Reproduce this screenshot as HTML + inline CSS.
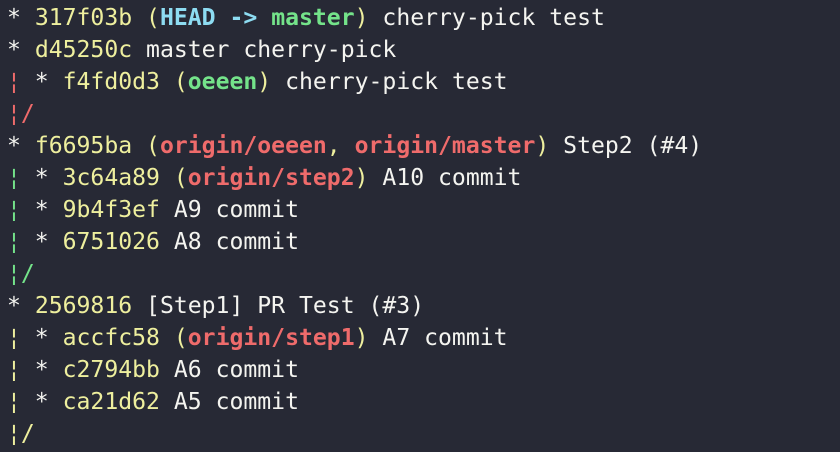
<!DOCTYPE html>
<html><head><meta charset="utf-8"><style>
html,body{margin:0;padding:0;background:#272935;width:840px;height:452px;overflow:hidden}
pre{margin:0;padding:2px 0 0 7px;font-family:"DejaVu Sans Mono","Liberation Mono",monospace;font-size:23.1px;line-height:32px;color:#f4f4f0;letter-spacing:0}
.y{color:#eeef9e}.c{color:#8ddcf2;font-weight:bold}.g{color:#74e38a;font-weight:bold}.r{color:#ef6b6b}.rb{color:#ef6b6b;font-weight:bold}.gr{color:#74e38a}
</style></head><body><pre>* <span class="y">317f03b (<span class="c">HEAD -&gt; </span><span class="g">master</span>)</span> cherry-pick test
* <span class="y">d45250c</span> master cherry-pick
<span class="r">¦</span> * <span class="y">f4fd0d3 (<span class="g">oeeen</span>)</span> cherry-pick test
<span class="r">¦/</span>
* <span class="y">f6695ba (<span class="rb">origin/oeeen</span>, <span class="rb">origin/master</span>)</span> Step2 (#4)
<span class="gr">¦</span> * <span class="y">3c64a89 (<span class="rb">origin/step2</span>)</span> A10 commit
<span class="gr">¦</span> * <span class="y">9b4f3ef</span> A9 commit
<span class="gr">¦</span> * <span class="y">6751026</span> A8 commit
<span class="gr">¦/</span>
* <span class="y">2569816</span> [Step1] PR Test (#3)
<span class="y">¦</span> * <span class="y">accfc58 (<span class="rb">origin/step1</span>)</span> A7 commit
<span class="y">¦</span> * <span class="y">c2794bb</span> A6 commit
<span class="y">¦</span> * <span class="y">ca21d62</span> A5 commit
<span class="y">¦/</span></pre></body></html>
